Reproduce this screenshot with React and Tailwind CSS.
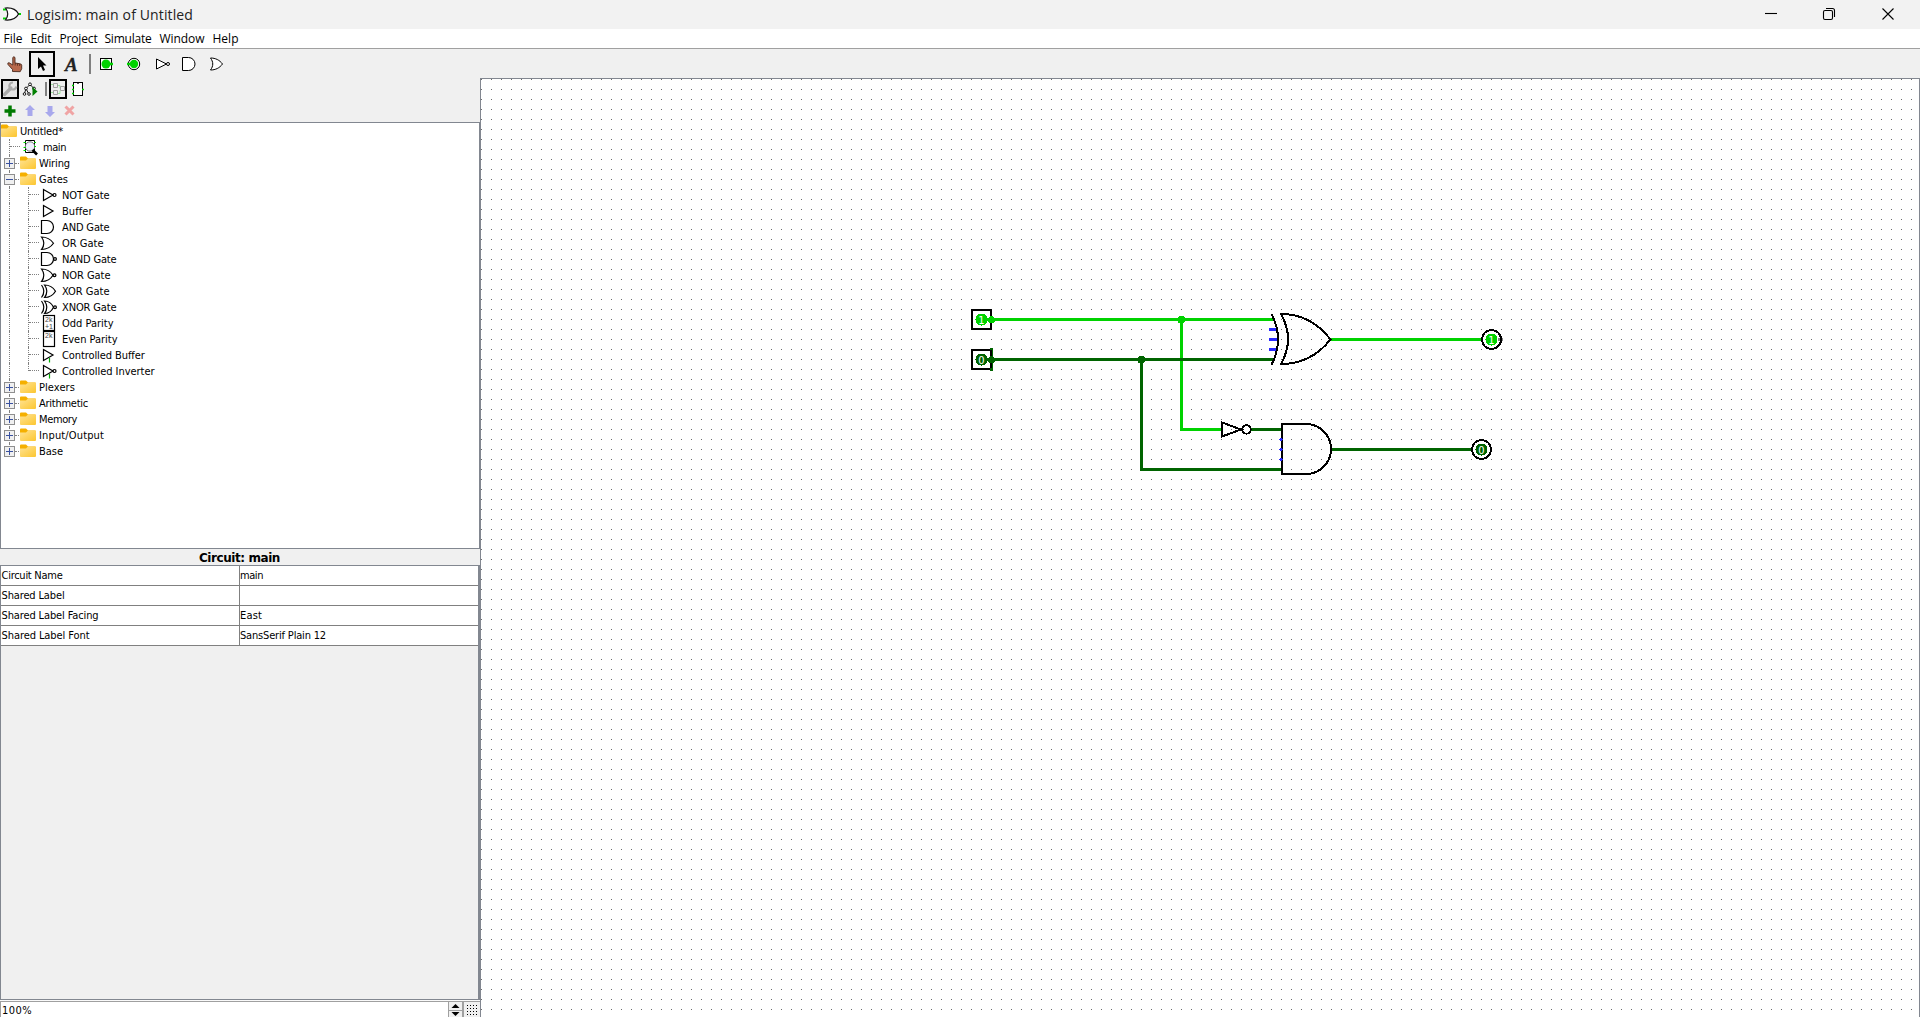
import React, { useLayoutEffect, useRef, useState } from "react";

const G = "#00d200";
const D = "#006400";

// Text whose letter spacing is tuned so that it fills a given width.
function Fit({ children, width, className }) {
  const ref = useRef(null);
  const [spacing, setSpacing] = useState(0);
  useLayoutEffect(() => {
    const natural = ref.current.getBoundingClientRect().width;
    setSpacing((width - natural) / children.length);
  }, [children, width]);
  return (
    <span ref={ref} className={className} style={{ letterSpacing: spacing + "px" }}>
      {children}
    </span>
  );
}

function Label({ children, width }) {
  return (
    <Fit
      width={width}
      className="block h-4 shrink-0 self-start whitespace-pre font-['DejaVu_Sans_Condensed','DejaVu_Sans',sans-serif] text-[11px] leading-[18px]"
    >
      {children}
    </Fit>
  );
}

const ICONS = {
  not: (
    <>
      <path d="M2.5 2.5v11l9.500-5.500z" />
      <circle cx="13.500" cy="8" r="1.500" />
    </>
  ),
  buffer: <path d="M2.500 2.500v11l9.500-5.500z" />,
  and: <path d="M.5 1.500h5.500a6.500 6.500 0 0 1 0 13H.5z" />,
  or: <path d="M.5 2c5 0 9 2 12 6.250C9.500 12.500 5.500 14.500 .5 14.500c3-4 3-8.500 0-12.500z" />,
  nand: (
    <>
      <path d="M.5 1.500h5.500a6.500 6.500 0 0 1 0 13H.5z" />
      <circle cx="14" cy="8" r="1.400" />
    </>
  ),
  nor: (
    <>
      <path d="M.5 2c5 0 9 2 11.500 6.250C9.500 12.500 5.500 14.500 .5 14.500c3-4 3-8.500 0-12.500z" />
      <circle cx="13.500" cy="8.250" r="1.400" />
    </>
  ),
  xor: (
    <>
      <path d="M3.500 2c5 0 8.500 2 11 6.250-2.500 4.250-6 6.250-11 6.250 3-4 3-8.500 0-12.500z" />
      <path d="M.5 2c3 4 3 8.500 0 12.500" />
    </>
  ),
  xnor: (
    <>
      <path d="M3.500 2c4 0 7 2 9 6.250-2 4.250-5 6.250-9 6.250 3-4 3-8.500 0-12.500z" />
      <path d="M.5 2c3 4 3 8.500 0 12.500" />
      <circle cx="14" cy="8.250" r="1.400" />
    </>
  ),
  cbuffer: (
    <>
      <path d="M2.500 2.500v11l9.500-5.500z" />
      <path d="M8.500 11v4.500" stroke="#00b000" />
    </>
  ),
  cinv: (
    <>
      <path d="M2.500 2.500v11l9.500-5.500z" />
      <circle cx="13.500" cy="8" r="1.500" />
      <path d="M8.500 11v4.500" stroke="#00b000" />
    </>
  ),
};

function GateIcon({ kind }) {
  return (
    <svg className="block h-4 w-4 shrink-0 overflow-visible" viewBox="0 0 16 16" fill="none" stroke="#000" strokeWidth="1.200">
      {kind === "odd" || kind === "even" ? (
        <>
          <rect x="2.500" y="0.500" width="11" height="15" fill="#fff" />
          <text x="4" y="7" fontSize="7" fill="#444" stroke="none" fontFamily="Liberation Sans, sans-serif">2k</text>
          {kind === "odd" && (
            <text x="4" y="14" fontSize="7" fill="#444" stroke="none" fontFamily="Liberation Sans, sans-serif">+1</text>
          )}
        </>
      ) : (
        ICONS[kind]
      )}
    </svg>
  );
}

function Folder() {
  return (
    <svg className="block h-4 w-4 shrink-0" viewBox="0 0 16 16">
      <defs>
        <linearGradient id="folder" x1="0" y1="0" x2="1" y2="1">
          <stop offset="0" stopColor="#ffe394" />
          <stop offset="1" stopColor="#fcc62f" />
        </linearGradient>
      </defs>
      <path d="M0 2.500Q0 1.500 1 1.500h5l2 2h7q1 0 1 1v4H0z" fill="#f5b000" />
      <path d="M0 5.500h6l2-2h7q1 0 1 1v8.500q0 1-1 1H1q-1 0-1-1z" fill="url(#folder)" />
    </svg>
  );
}

function CircuitIcon() {
  return (
    <svg className="block h-4 w-4 shrink-0 overflow-visible" viewBox="0 0 16 16" fill="none">
      <path d="M3.500 1.500h9v12h-9z" fill="#fff" stroke="#000" />
      <circle cx="8" cy="7.500" r="4.700" fill="#eeeefc" stroke="#666" strokeWidth="0.900" />
      <path d="M1.500 3.500h2.500M1.500 8.500h2.500M1.500 11.500h2.500M12 3.500h2M12 7.500h2" stroke={G} strokeWidth="1.200" />
      <path d="M10.500 11l4.500 4.500" stroke="#000" strokeWidth="2.600" />
    </svg>
  );
}

function Toggle({ open }) {
  return (
    <svg className="block h-[11px] w-[11px] shrink-0" viewBox="0 0 11 11">
      <rect x="0.500" y="0.500" width="10" height="10" fill="#f0f0f0" stroke="#8f8f8f" />
      <path d={open ? "M2 5.500h7" : "M2 5.500h7M5.500 2v7"} stroke="#3a52a0" />
    </svg>
  );
}

function Branch({ last }) {
  return (
    <div className="flex h-4 w-[13px] shrink-0 flex-col">
      <div className={last ? "h-2 border-l border-dotted border-[#808080]" : "h-4 border-l border-dotted border-[#808080]"}>
        <div className="mt-[7px] w-[10px] border-t border-dotted border-[#808080]" />
      </div>
    </div>
  );
}

const GATES = [
  ["not", "NOT Gate", 47.5],
  ["buffer", "Buffer", 30.5],
  ["and", "AND Gate", 47.5],
  ["or", "OR Gate", 41.5],
  ["nand", "NAND Gate", 54.5],
  ["nor", "NOR Gate", 48.5],
  ["xor", "XOR Gate", 47.5],
  ["xnor", "XNOR Gate", 54.5],
  ["odd", "Odd Parity", 51.5],
  ["even", "Even Parity", 55.5],
  ["cbuffer", "Controlled Buffer", 82.5],
  ["cinv", "Controlled Inverter", 92.5],
];

function FolderRow({ name, width, open, last }) {
  return (
    <div className="flex h-4 items-center">
      <div className="relative ml-[3px] flex h-4 w-4 items-center">
        <div className={last ? "absolute left-[5px] top-0 h-2 border-l border-dotted border-[#808080]" : "absolute left-[5px] top-0 h-4 border-l border-dotted border-[#808080]"} />
        <div className="absolute left-[11px] top-[8px] w-1 border-t border-dotted border-[#808080]" />
        <div className="relative"><Toggle open={open} /></div>
      </div>
      <Folder />
      <div className="w-[3px]" />
      <Label width={width}>{name}</Label>
    </div>
  );
}

function Tree() {
  return (
    <div className="flex h-[427px] w-[480px] flex-col border border-[#828790] bg-white">
      <div className="flex h-4 w-full items-center">
        <Folder />
        <div className="w-[3px]" />
        <Label width={43}>Untitled*</Label>
      </div>
      <div className="flex h-4 items-center">
        <div className="w-2" />
        <Branch />
        <CircuitIcon />
        <div className="w-[5px]" />
        <Label width={23}>main</Label>
      </div>
      <FolderRow name="Wiring" width={31} />
      <FolderRow name="Gates" width={29} open />
      {GATES.map(([kind, name, width], i) => (
        <div key={name} className="flex h-4 items-center">
          <div className="ml-2 h-4 w-[19px] border-l border-dotted border-[#808080]" />
          <Branch last={i === 11} />
          <GateIcon kind={kind} />
          <div className="w-[5px]" />
          <Label width={width}>{name}</Label>
        </div>
      ))}
      <FolderRow name="Plexers" width={36} />
      <FolderRow name="Arithmetic" width={49} />
      <FolderRow name="Memory" width={38} />
      <FolderRow name="Input/Output" width={65} />
      <FolderRow name="Base" width={24} last />
    </div>
  );
}

function MenuBar() {
  const items = [
    ["File", 19, "w-[27px]"],
    ["Edit", 21, "w-[29px]"],
    ["Project", 38, "w-[45px]"],
    ["Simulate", 47, "w-[55px]"],
    ["Window", 45, "w-[53px]"],
    ["Help", 26, "w-[26px]"],
  ];
  return (
    <div className="flex h-5 border-b border-[#a0a0a0] bg-white pl-[3.500px]">
      {items.map(([t, w, box]) => (
        <div key={t} className={box}>
          <Fit width={w} className="inline-block whitespace-pre align-top font-['Open_Sans',sans-serif] text-xs font-medium leading-[19px]">
            {t}
          </Fit>
        </div>
      ))}
    </div>
  );
}

function TitleBar() {
  return (
    <div className="flex h-[29px] items-center bg-[#f2f2f2]">
      <svg className="block h-[29px] w-[27px]" viewBox="0 0 27 29" fill="none">
        <path d="M3 9.500h3M3 18.500h3M18 14h3" stroke={G} strokeWidth="2" />
        <path d="M5.500 8c7-.5 11 2 13 6-2 4-6 6.500-13 6 3-4 3-8 0-12z" fill="#fff" stroke="#111" strokeWidth="1.200" />
      </svg>
      <Fit width={166} className="block whitespace-pre font-['Open_Sans',sans-serif] text-sm leading-7 text-[#222]">
        Logisim: main of Untitled
      </Fit>
      <div className="grow" />
      <svg className="block h-[29px] w-[155px]" viewBox="0 0 155 29" fill="none" stroke="#000" strokeWidth="1.100">
        <path d="M0 13.500h12" />
        <rect x="58.500" y="10.500" width="9" height="9" rx="1.500" />
        <path d="M61 8.500h6.500q2 0 2 2V17" />
        <path d="M117.500 8.500l11 11M128.500 8.500l-11 11" />
      </svg>
    </div>
  );
}

function Toolbar() {
  return (
    <svg className="block h-[29px] w-[300px]" viewBox="0 49 300 29" fill="none" stroke="#000">
      <path d="M12.500 71.500v-2l-4.500-5q-.8-2 1-1.800l3.800 2.300V57.500q1-1.500 2.200 0v5.500l2 .3 2 .3 2.200.6 .5 1v3.500l-1.500 3z" fill="#b8694c" stroke="#4a2a1e" strokeWidth="0.900" />
      <path d="M15.200 63v2.500M17.500 63.500v2.200M19.700 64v2" stroke="#4a2a1e" strokeWidth="0.800" />
      <rect x="30" y="52" width="24" height="24" fill="#f0f0f0" strokeWidth="2" />
      <path d="M38 57v12l3-2.500 2 4.500 2-1-2-4.500h3.500z" fill="#000" stroke="none" />
      <text x="65" y="71" fontSize="19" fontWeight="bold" fontStyle="italic" fill="#222" stroke="#222" strokeWidth="0.300" fontFamily="Liberation Serif, serif">A</text>
      <path d="M90 54v20" stroke="#808080" strokeWidth="2" />
      <rect x="100.500" y="58.500" width="11" height="11" fill="#fff" />
      <circle cx="106" cy="64" r="4.500" fill={G} stroke="none" />
      <path d="M106 64h7" stroke={G} strokeWidth="2.500" />
      <circle cx="134" cy="64" r="5.700" fill="#fff" />
      <circle cx="134" cy="64" r="4.200" fill={G} stroke="none" />
      <path d="M127 64h4" stroke={G} strokeWidth="2.500" />
      <path d="M156.500 59v10l10-5z" fill="#fff" />
      <circle cx="168" cy="64" r="1.500" fill="#fff" />
      <path d="M182.500 57.500h6a6.500 6.500 0 0 1 0 13h-6z" fill="#fff" />
      <path d="M210.500 58c5 0 9 2 12 6-3 4-7 6-12 6 3-4 3-8 0-12z" fill="#fff" />
    </svg>
  );
}

function ExplorerTools() {
  return (
    <svg className="block h-[44px] w-[480px]" viewBox="0 78 480 44" fill="none" stroke="#000">
      <rect x="2" y="80" width="16" height="18" fill="#e4e4e4" strokeWidth="2" />
      <path d="M4.500 94.500l6.500-6.500" stroke="#aaa" strokeWidth="3.200" strokeLinecap="round" />
      <path d="M13 82.500a3.500 3.500 0 1 0 3.300 4" stroke="#aaa" strokeWidth="2.200" />
      <g strokeWidth="0.900" fill="#fff">
        <path d="M30 84.500l-4 4-1.500 5M30 84.500l4 4M26 88.500l2.500 5" />
        <circle cx="30" cy="84.300" r="1.400" />
        <circle cx="26" cy="88.500" r="1.400" />
        <circle cx="34" cy="88.500" r="1.400" />
        <circle cx="24.500" cy="94" r="1.300" />
        <circle cx="29" cy="94" r="1.300" />
      </g>
      <path d="M32.500 87v9l5-4.500z" fill="#008000" stroke="none" />
      <path d="M46 82v14" stroke="#808080" strokeWidth="2" />
      <rect x="50" y="80" width="16" height="18" fill="#eee" strokeWidth="2" />
      <g stroke="#a0a0a0">
        <path d="M51 84.500h3M51 92.500h3M58 85.500h2v3h1M58 93.500h2v-3" stroke="#9be29b" />
        <path d="M53.500 83.500h4v4h-4zM53.500 90.500h4v4h-4zM60.500 86.500h4v4h-4z" />
      </g>
      <rect x="73.500" y="82.500" width="9" height="13" fill="#fff" />
      <path d="M76.500 82.500q1.500 2 3 0" />
      <path d="M72 85.500h2M72 89.500h2M72 93.500h2M82 89.500h2" stroke={G} strokeWidth="1.500" />
      <path d="M10 105.500v11M4.500 111h11" stroke="#007a00" strokeWidth="3.500" />
      <path d="M30 105l5 5h-2.500v6h-5v-6H25z" fill="#a8a8ec" stroke="none" />
      <path d="M50 117l5-5h-2.500v-6h-5v6H45z" fill="#a8a8ec" stroke="none" />
      <path d="M65.500 106.500l8 8M73.500 106.500l-8 8" stroke="#f0a4a4" strokeWidth="3" />
    </svg>
  );
}

function Attributes() {
  const rows = [
    ["Circuit Name", 61, "main", 23],
    ["Shared Label", 63, "", 0],
    ["Shared Label Facing", 97, "East", 22],
    ["Shared Label Font", 88, "SansSerif Plain 12", 86],
  ];
  return (
    <div className="flex grow flex-col">
      <div className="flex h-4 justify-center pr-px">
        <Fit width={81} className="block whitespace-pre font-['DejaVu_Sans',sans-serif] text-xs font-bold leading-[19px]">
          Circuit: main
        </Fit>
      </div>
      <div className="flex grow flex-col border border-r-2 border-[#828790]">
        {rows.map(([k, kw, v, vw]) => (
          <div key={k} className="flex h-5 border-b border-[#808080] bg-white">
            <div className="w-[239px] border-r border-[#808080] pt-px">
              <div className="flex pl-[0.500px]"><Label width={kw}>{k}</Label></div>
            </div>
            <div className="flex pt-px">{v && <Label width={vw}>{v}</Label>}</div>
          </div>
        ))}
      </div>
    </div>
  );
}

function ZoomBar() {
  return (
    <div className="flex h-[17px] border-t border-[#fafafa] bg-[#f0f0f0]">
      <div className="flex w-[448px] border-l border-t border-[#a0a0a0] bg-white pl-px"><Label width={30}>100%</Label></div>
      <svg className="block h-4 w-8" viewBox="0 0 32 16">
        <path d="M0 0h32v1H0zM0 0h1v16H0zM14 0h2v16h-2z" fill="#a0a0a0" />
        <path d="M0 9.500h15" stroke="#a0a0a0" />
        <path d="M3.500 7h8l-4-4zM3.500 11h8l-4 4z" fill="#000" />
        {[0, 1, 2, 3].map((r) =>
          [0, 1, 2, 3].map((c) => <rect key={r * 4 + c} x={19 + c * 3} y={4 + r * 3} width="1" height="1" />)
        )}
      </svg>
    </div>
  );
}

function Value({ x, y, color, children }) {
  return (
    <>
      <circle cx={x} cy={y} r="6" fill={color} />
      <text x={x} y={y + 4} fontSize="11" textAnchor="middle" fill="#fff" fontFamily="DejaVu Sans Condensed, sans-serif">{children}</text>
    </>
  );
}

function Canvas() {
  return (
    <svg className="block h-[938px] w-[1438px]" viewBox="481 79 1438 938" fill="none" shapeRendering="crispEdges">
      <defs>
        <pattern id="dots" x="481" y="79" width="10" height="10" patternUnits="userSpaceOnUse">
          <rect x="0" y="0" width="1" height="1" fill="#6c6c6c" />
        </pattern>
      </defs>
      <rect x="481" y="79" width="1438" height="938" fill="url(#dots)" />
      <g strokeWidth="3">
        <path d="M991 319.500h284M1181.500 319.500v110h40M1331 339.500h152" stroke={G} strokeLinejoin="miter" />
        <path d="M991 359.500h284M1141.500 359.500v110h141M1250 429.500h32M1331 449.500h142" stroke={D} />
        <path d="M1269 329.500h8M1269 339.500h8M1269 349.500h8" stroke="#2828ff" />
      </g>
      <circle cx="1181.500" cy="319.500" r="4" fill={G} />
      <circle cx="1141.500" cy="359.500" r="4" fill={D} />
      <g stroke="#000" strokeWidth="2">
        <rect x="972" y="310" width="19" height="19" />
        <rect x="972" y="350" width="19" height="19" />
        <path d="M1271.500 314q13 25 0 51" />
        <path d="M1281 314q30 0 49.500 25.500q-19.500 24.500-49.500 24.500q14-25 0-50z" />
        <path d="M1282 424h24a25 25 0 0 1 0 50h-24z" />
        <path d="M1222 422.500v14l19-7z" />
        <circle cx="1246.500" cy="429.500" r="4.200" />
        <circle cx="1491.500" cy="339.500" r="9.500" fill="#fff" />
        <circle cx="1481.500" cy="449.500" r="9.500" fill="#fff" />
      </g>
      <path d="M1279 439.500h4M1279 449.500h4M1279 459.500h4" stroke="#2828ff" />
      <path d="M1281 438v3M1281 448v3M1281 458v3" stroke="#2828ff" strokeWidth="2" />
      <path d="M987 319.500h4" stroke={G} strokeWidth="3" />
      <path d="M987 359.500h4" stroke={D} strokeWidth="3" />
      <Value x={981.5} y={319.5} color={G}>1</Value>
      <Value x={981.5} y={359.5} color={D}>0</Value>
      <Value x={1491.5} y={339.5} color={G}>1</Value>
      <Value x={1481.5} y={449.5} color={D}>0</Value>
      <path d="M1498 339.500h5" stroke="#808080" strokeWidth="3" />
      <path d="M1501 336v7" stroke="#000" strokeWidth="2" />
      <path d="M991.500 348v23" stroke={D} strokeWidth="3" />
      <path d="M991 350v18" stroke="#000" strokeWidth="2" />
      <circle cx="991.500" cy="319.500" r="3.500" fill={G} />
      <circle cx="991.500" cy="359.500" r="3.500" fill={D} />
    </svg>
  );
}

export default function App() {
  return (
    <div className="flex h-[1017px] w-[1920px] flex-col overflow-hidden bg-[#f0f0f0] text-black">
      <TitleBar />
      <MenuBar />
      <div className="flex h-[29px]"><Toolbar /></div>
      <div className="flex grow">
        <div className="flex w-[480px] flex-col">
          <ExplorerTools />
          <Tree />
          <Attributes />
          <ZoomBar />
        </div>
        <div className="flex grow border-l border-r border-t border-[#828790] bg-white">
          <Canvas />
        </div>
      </div>
    </div>
  );
}
